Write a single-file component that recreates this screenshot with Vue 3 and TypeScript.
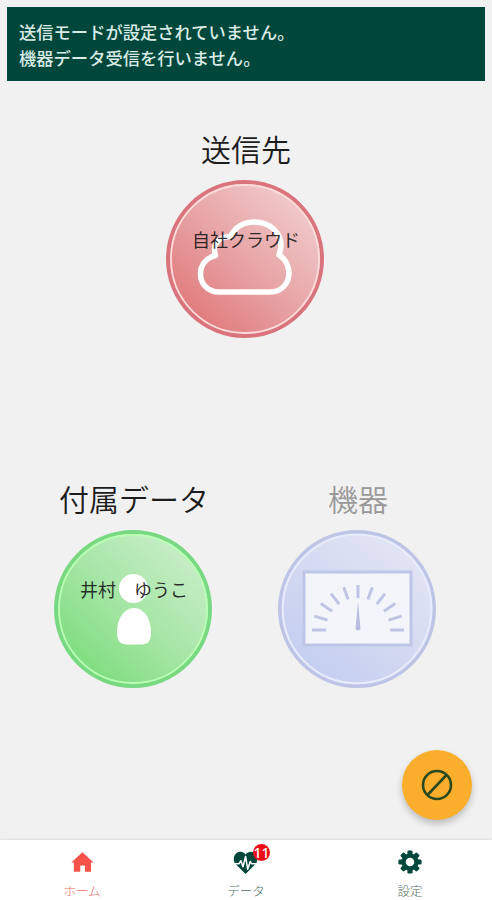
<script setup lang="ts">
interface Tick { x1: number; y1: number; x2: number; y2: number }

const ticks: Tick[] = Array.from({ length: 11 }, (_, i) => {
  const a = (Math.PI * i) / 10
  return {
    x1: 81 - 46 * Math.cos(a),
    y1: 101 - 45 * Math.sin(a),
    x2: 81 - 32 * Math.cos(a),
    y2: 101 - 32 * Math.sin(a),
  }
})

const teeth: number[] = [0, 45, 90, 135, 180, 225, 270, 315]
const dataCount = 11
</script>

<template>
  <div class="screen">
    <header class="banner">
      <p>送信モードが設定されていません。</p>
      <p>機器データ受信を行いません。</p>
    </header>

    <main class="content">
      <section class="block destination">
        <h2>送信先</h2>
        <button class="disc">
          <svg viewBox="0 0 160 160" width="160" height="160">
            <defs>
              <linearGradient id="red" x1="0.85" y1="0.15" x2="0.2" y2="0.85">
                <stop offset="0" stop-color="#f0c8c9" />
                <stop offset="0.5" stop-color="#e8a6a8" />
                <stop offset="1" stop-color="#e17f80" />
              </linearGradient>
            </defs>
            <circle cx="80" cy="80" r="77" fill="url(#red)" stroke="#da747c" stroke-width="4" />
            <circle cx="80" cy="80" r="74" fill="none" stroke="#fbdcda" stroke-width="1.8" />
            <path
              d="M54 113C43 113 35.5 105 35.5 95C35.5 86 41 79 50.500 76.500C47 66 53 57.500 65.500 57.500C70 48 79 43 89.500 43C105 43 116 54 116 66C116 70 115 73 114 76C120 79 124 87 124 94C124 105 116 113 105 113Z"
              fill="none" stroke="#fff" stroke-width="5.5" stroke-linejoin="round"
            />
          </svg>
          <span class="disc-label">自社クラウド</span>
        </button>
      </section>

      <div class="pair">
        <section class="block">
          <h2>付属データ</h2>
          <button class="disc">
            <svg viewBox="0 0 160 160" width="160" height="160">
              <defs>
                <linearGradient id="green" x1="0.85" y1="0.15" x2="0.2" y2="0.85">
                  <stop offset="0" stop-color="#c6edc6" />
                  <stop offset="0.5" stop-color="#a8e6a8" />
                  <stop offset="1" stop-color="#82de82" />
                </linearGradient>
              </defs>
              <circle cx="80" cy="80" r="77" fill="url(#green)" stroke="#78d982" stroke-width="4" />
              <circle cx="80" cy="80" r="74" fill="none" stroke="#b9ffb4" stroke-width="1.8" />
              <circle cx="80.500" cy="59.500" r="14.500" fill="#fff" />
              <path d="M81 79C91 79 98 90 98 103C98 112 95 115.500 88 115.500H74C67 115.500 64 112 64 103C64 90 71 79 81 79Z" fill="#fff" />
            </svg>
            <span class="disc-label">井村　ゆうこ</span>
          </button>
        </section>

        <section class="block device">
          <h2>機器</h2>
          <button class="disc" disabled>
            <svg viewBox="0 0 160 160" width="160" height="160">
              <defs>
                <linearGradient id="blue" x1="0.8" y1="0.1" x2="0.2" y2="0.85">
                  <stop offset="0" stop-color="#e1e4f3" />
                  <stop offset="0.5" stop-color="#d4daf1" />
                  <stop offset="1" stop-color="#c5cff0" />
                </linearGradient>
              </defs>
              <circle cx="80" cy="80" r="77.300" fill="url(#blue)" stroke="#bec4e5" stroke-width="3.400" />
              <circle cx="80" cy="80" r="74.200" fill="none" stroke="#e8ebfb" stroke-width="2" />
              <rect x="27" y="43" width="107" height="73" fill="#f4f5fa" stroke="#bec6e5" stroke-width="3" />
              <g stroke="#bfc4e4" stroke-width="3">
                <line v-for="(t, i) in ticks" :key="i" :x1="t.x1" :y1="t.y1" :x2="t.x2" :y2="t.y2" />
              </g>
              <path d="M81 73L83.500 100Q81 103 78.500 100Z" fill="#b8bde0" />
            </svg>
          </button>
        </section>
      </div>
    </main>

    <button class="fab" aria-label="停止">
      <svg viewBox="0 0 32 32" width="32" height="32" fill="none" stroke="#2b491f" stroke-width="2.600">
        <circle cx="16" cy="16" r="14" />
        <path d="M25.500 6L6.500 26" />
      </svg>
    </button>

    <nav class="tabs">
      <a class="tab active">
        <svg class="icon" viewBox="0 0 28 28" width="28" height="28">
          <path fill="#f5524a" d="M14.500 2.500L27.500 14.500H24.500V25.500H17.500V18H12V25.500H4.500V14.500H1.500Z" />
        </svg>
        <span>ホーム</span>
      </a>
      <a class="tab">
        <svg class="icon" viewBox="0 0 28 28" width="28" height="28">
          <path fill="#00473b" d="M13.500 28L1.500 16C-2 11 0 2.500 7 2C10 1.800 12.500 3.500 13.500 5.500C14.500 3.500 17 1.800 20 2C27 2.500 29 11 25.500 16Z" />
          <path fill="none" stroke="#fff" stroke-width="1.800" stroke-linejoin="round" d="M0 16H6L8 12.500L10.500 19.500L13.500 7.500L16 22.500L19 13.500L20.500 16H28" />
        </svg>
        <b class="badge">{{ dataCount }}</b>
        <span>データ</span>
      </a>
      <a class="tab">
        <svg class="icon" viewBox="0 0 28 28" width="28" height="28">
          <g fill="#00473b">
            <rect v-for="a in teeth" :key="a" x="11" y=".5" width="6" height="7" rx="1.500" :transform="`rotate(${a} 14 14)`" />
          </g>
          <circle cx="14" cy="14" r="7.500" fill="none" stroke="#00473b" stroke-width="5" />
        </svg>
        <span>設定</span>
      </a>
    </nav>
  </div>
</template>

<style>
body { margin: 0; }
</style>

<style scoped>
.screen {
  position: relative;
  display: flex;
  flex-direction: column;
  box-sizing: border-box;
  height: 900px;
  padding-top: 7px;
  overflow: hidden;
  background: #f1f1f1;
  color: #1c1c1c;
  font-family: "Noto Sans CJK JP", "Noto Sans", sans-serif;
}
.banner {
  box-sizing: border-box;
  height: 74px;
  margin: 0 7px;
  padding: 12px;
  background: #00473b;
  color: #d9ebe6;
  font-size: 17.300px;
  font-weight: 500;
  line-height: 25.500px;
}
.banner p { margin: 0; }
.content {
  display: flex;
  flex-direction: column;
  padding-top: 45px;
}
.block {
  display: flex;
  flex-direction: column;
  align-items: center;
  width: 160px;
}
h2 {
  margin: 0 0 9px;
  padding-left: 2px;
  font-size: 30px;
  font-weight: 350;
  line-height: 44px;
  white-space: nowrap;
}
.destination { margin-left: 165px; }
.pair {
  display: flex;
  gap: 64px;
  margin: 137px 0 0 53px;
}
.device h2 { color: #999; }
button {
  padding: 0;
  border: 0;
  background: none;
  color: inherit;
  font: inherit;
}
.disc {
  position: relative;
  width: 160px;
  height: 160px;
}
.disc svg { display: block; }
.disc-label {
  position: absolute;
  top: 47px;
  left: 1px;
  width: 100%;
  color: rgba(20, 20, 20, 0.9);
  font-size: 18px;
  line-height: 26px;
  text-align: center;
  white-space: nowrap;
}
.fab {
  position: absolute;
  top: 750px;
  left: 402px;
  display: flex;
  align-items: center;
  justify-content: center;
  width: 70px;
  height: 70px;
  border-radius: 50%;
  background: #fbae2c;
  box-shadow: 0 4px 7px rgba(0, 0, 0, 0.22);
}
.tabs {
  display: flex;
  box-sizing: border-box;
  height: 60px;
  margin-top: auto;
  background: #fff;
  box-shadow: 0 0 3px rgba(0, 0, 0, 0.14);
}
.tab {
  position: relative;
  display: flex;
  flex: 1;
  flex-direction: column;
  align-items: center;
  padding-top: 10px;
  color: #54706a;
  font-size: 12.500px;
  font-weight: 300;
  line-height: 18px;
}
.icon { display: block; margin-bottom: 8px; }
.tab.active { color: #ef6c68; }
.badge {
  position: absolute;
  top: 4px;
  left: calc(50% + 7px);
  width: 17px;
  height: 17px;
  border-radius: 50%;
  background: #ed0d19;
  color: #fff;
  font: 500 14px/17px "Noto Sans", sans-serif;
  text-align: center;
}
</style>
